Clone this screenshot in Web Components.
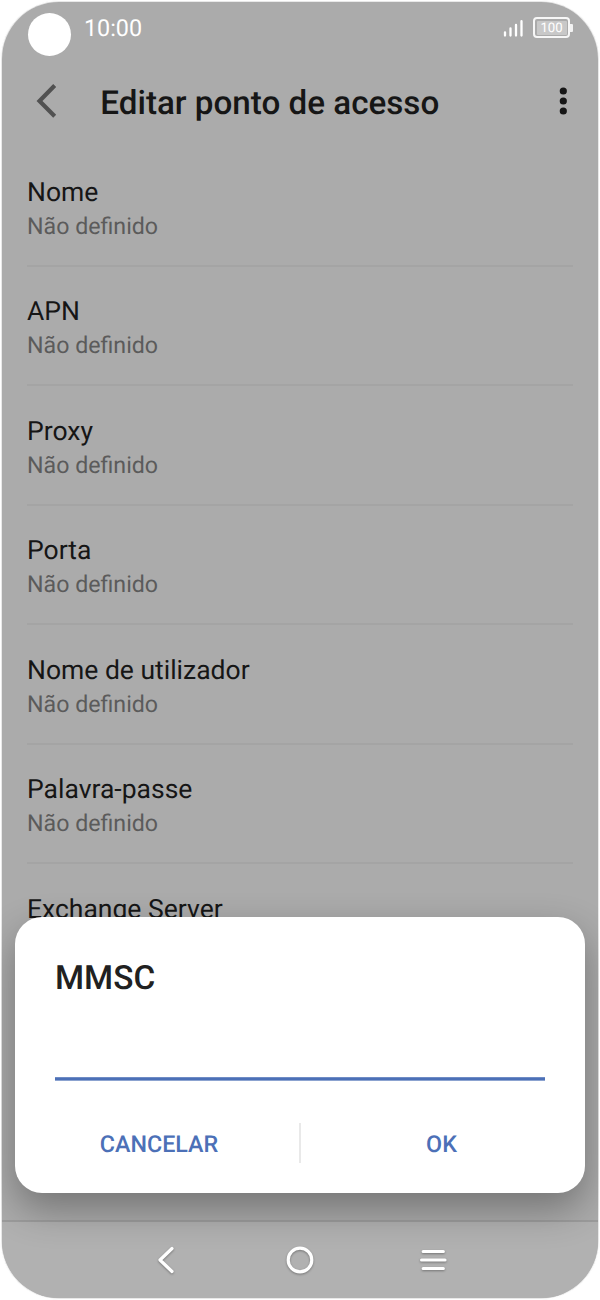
<!DOCTYPE html>
<html lang="pt">
<head>
<meta charset="utf-8">
<title>Editar ponto de acesso</title>
<style>
html,body{margin:0;background:#fff}
body{width:600px;height:1300px;overflow:hidden;font-family:Roboto,"Liberation Sans",sans-serif;text-rendering:geometricPrecision}
</style>
</head>
<body>
<phone-screen>
  <status-bar slot="top" time="10:00" battery="100"></status-bar>
  <app-header slot="top">Editar ponto de acesso</app-header>
  <setting-row>Nome<span slot="value">Não definido</span></setting-row>
  <setting-row>APN<span slot="value">Não definido</span></setting-row>
  <setting-row>Proxy<span slot="value">Não definido</span></setting-row>
  <setting-row>Porta<span slot="value">Não definido</span></setting-row>
  <setting-row>Nome de utilizador<span slot="value">Não definido</span></setting-row>
  <setting-row>Palavra-passe<span slot="value">Não definido</span></setting-row>
  <setting-row>Exchange Server</setting-row>
  <nav-bar slot="bottom"></nav-bar>
  <input-dialog slot="overlay">MMSC<span slot="cancel">CANCELAR</span><span slot="ok">OK</span></input-dialog>
</phone-screen>
<script>
function define(name, render) {
  customElements.define(name, class extends HTMLElement {
    connectedCallback() {
      if (!this.shadowRoot) this.attachShadow({ mode: 'open' }).innerHTML = render(this);
    }
  });
}

define('phone-screen', () => `
<style>
:host{display:flex;flex-direction:column;position:relative;box-sizing:border-box;width:600px;height:1300px;overflow:hidden;border:1px solid #fff;border-radius:59px;background:#e8e8e8;padding:1px}
.screen{display:flex;flex-direction:column;height:1296px;overflow:hidden;border-radius:57px;background:#ababab}
.list{flex:1;min-height:0;overflow:hidden}
</style>
<div class="screen">
  <slot name="top"></slot>
  <div class="list"><slot></slot></div>
  <slot name="bottom"></slot>
  <slot name="overlay"></slot>
</div>`);

define('status-bar', el => `
<style>
:host{display:flex;height:58px;flex:none;color:#fff;padding:0 25px 0 26px}
.cam{width:43px;height:43px;border-radius:50%;background:#fff;margin-top:11px}
.time{font-size:23.33px;line-height:52px;margin-left:13px;flex:1}
.sig{margin:17px 10px 0 0}
.bat{display:flex;margin-top:15px}
.cell{box-sizing:border-box;width:37px;height:21px;border:2px solid #f7f7f7;border-radius:4px;padding:1.5px}
.fill{height:14px;border-radius:1px;background:#c8c8c8;font-size:13.200px;line-height:15px;text-align:center}
.cap{width:3px;height:8px;margin-top:6.500px;background:#f2f2f2;border-radius:0 1px 1px 0}
</style>
<div class="cam"></div>
<div class="time">${el.getAttribute('time')}</div>
<svg class="sig" width="20" height="19" viewBox="0 0 20 19" stroke="#fff" stroke-width="2.3" stroke-linecap="round"><path d="M2 16.500v-3.200M7.5 16.500V9.500M13 16.500V6M18.500 16.500V2.200"/></svg>
<div class="bat"><div class="cell"><div class="fill">${el.getAttribute('battery')}</div></div><div class="cap"></div></div>`);

define('app-header', () => `
<style>
:host{display:flex;align-items:center;height:87px;flex:none;color:#161616;font-size:33.200px;font-weight:500}
.back{margin:-5px 0 0 34px;flex:none}
.title{flex:1;line-height:40px;margin:0 0 0 43.300px;white-space:nowrap}
.more{margin:-5px 31px 0 0;flex:none}
</style>
<svg class="back" width="21" height="36" viewBox="0 0 21 36" fill="none" stroke="#515151" stroke-width="4.200"><path d="M18.700 2.500 3.500 18 18.700 33.200"/></svg>
<div class="title"><slot></slot></div>
<svg class="more" width="8" height="28" viewBox="0 0 8 28" fill="#161616"><circle cx="4.300" cy="4" r="3.600"/><circle cx="4.300" cy="14" r="3.600"/><circle cx="4.300" cy="24" r="3.600"/></svg>`);

define('setting-row', () => `
<style>
:host{display:block;box-sizing:border-box;height:119.45px;margin:0 25px;padding-top:29px;color:#161616}
.label{font-size:26.500px;line-height:34px}
.value{font-size:23.200px;line-height:34px;margin-top:-1px;height:56px;color:#5b5b5b}
.line{height:2px;background:#a4a4a4}
</style>
<div class="label"><slot></slot></div>
<div class="value"><slot name="value"></slot></div>
<div class="line"></div>`);

define('nav-bar', () => `
<style>
:host{display:block;box-sizing:border-box;flex:none;height:78px;border-top:2px solid #9c9c9c;background:#b1b1b1}
.icons{position:relative;z-index:2;display:flex;justify-content:center;padding-top:21px}
svg{filter:drop-shadow(0 1px 1px #0005)}
</style>
<div class="icons"><svg width="300" height="34" viewBox="150 1243 300 34" fill="none" stroke="#fff" stroke-width="3.200" stroke-linecap="round" stroke-linejoin="round"><path d="M172 1248.500 160 1260 172 1271.500M423.200 1251.500H443.300M421.600 1260H445M423.200 1268.500H443.300"/><circle cx="300" cy="1260" r="11.800"/></svg></div>`);

define('input-dialog', () => `
<style>
:host{display:flex;flex-direction:column;box-sizing:border-box;position:absolute;z-index:1;left:14px;top:916px;width:570px;height:276px;padding:0 40px;border-radius:27px;background:#fff;box-shadow:0 16px 38px rgba(0,0,0,.32)}
.title{font-size:33.300px;font-weight:500;line-height:40px;color:#212121;margin-top:42px}
.field{height:82px;background:linear-gradient(#6f8cc5 0 1px,#4c70b7 1px 3px,#8ca3d0 3px) bottom/100% 4px no-repeat}
.actions{display:flex;align-items:center;height:40px;margin-top:42px;color:#4c70b7;font-size:23.300px;font-weight:500}
.actions div{box-sizing:border-box;width:244px;text-align:center;padding-top:2px}
.actions .left{padding-right:36px}
.actions .right{padding-left:37px}
.actions i{width:2px;height:40px;background:#e9e9e9}
</style>
<div class="title"><slot></slot></div>
<div class="field"></div>
<div class="actions"><div class="left"><slot name="cancel"></slot></div><i></i><div class="right"><slot name="ok"></slot></div></div>`);
</script>
</body>
</html>
